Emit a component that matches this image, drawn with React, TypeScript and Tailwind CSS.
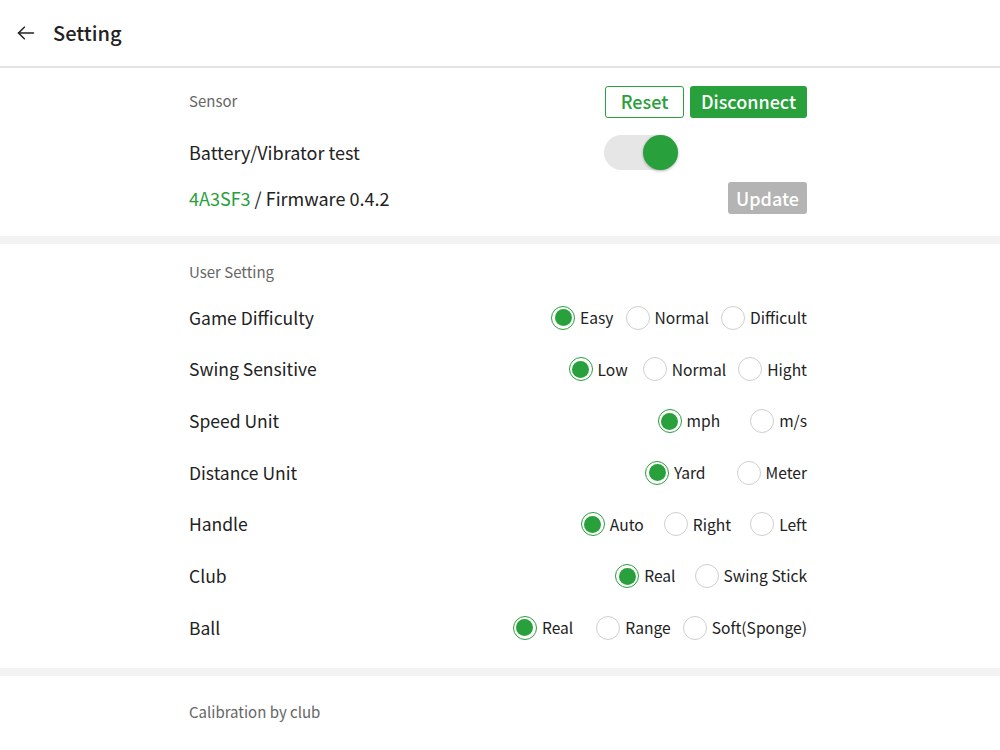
import React from "react";

const GREEN = "#28a03c";

const Radio: React.FC<{ checked?: boolean; label: string; className?: string }> = ({ checked, label, className }) => {
    return (
        <label className={`flex items-center ${className ?? ""}`}>
            {checked ? (
                <span className="w-[24px] h-[24px] rounded-full border-[1.5px] border-[#28a03c] flex items-center justify-center">
                    <span className="w-[17px] h-[17px] rounded-full bg-[#28a03c]" />
                </span>
            ) : (
                <span className="w-[24px] h-[24px] rounded-full border-[1.5px] border-[#cfcfcf] bg-white" />
            )}
            <span className="ml-[5px] text-[15.6px] text-[#222]">{label}</span>
        </label>
    );
};

const rows: { title: string; options: string[]; gaps: string[] }[] = [
    { title: "Game Difficulty", options: ["Easy", "Normal", "Difficult"], gaps: ["", "ml-[12px]", "ml-[12px]"] },
    { title: "Swing Sensitive", options: ["Low", "Normal", "Hight"], gaps: ["", "ml-[15px]", "ml-[12px]"] },
    { title: "Speed Unit", options: ["mph", "m/s"], gaps: ["", "ml-[30px]"] },
    { title: "Distance Unit", options: ["Yard", "Meter"], gaps: ["", "ml-[31px]"] },
    { title: "Handle", options: ["Auto", "Right", "Left"], gaps: ["", "ml-[20px]", "ml-[19px]"] },
    { title: "Club", options: ["Real", "Swing Stick"], gaps: ["", "ml-[19px]"] },
    { title: "Ball", options: ["Real", "Range", "Soft(Sponge)"], gaps: ["", "ml-[23px]", "ml-[12px]"] },
];

const App: React.FC = () => {
    return (
        <div className="w-[1000px] h-[750px] overflow-hidden bg-white text-[#222]" style={{ fontFamily: '"Noto Sans CJK KR", "Noto Sans", sans-serif' }}>
            {/* header */}
            <div className="h-[68px] flex items-center border-b-2 border-[#e3e3e3]">
                <svg className="ml-[16px]" width="20" height="20" viewBox="0 0 24 24" fill="none" stroke="#222" strokeWidth="1.8" strokeLinecap="round" strokeLinejoin="round">
                    <path d="M21 12H3" />
                    <path d="M10 5l-7 7 7 7" />
                </svg>
                <h1 className="ml-[17px] text-[20px] font-medium text-[#222]">Setting</h1>
            </div>

            {/* sensor */}
            <div className="w-[618px] ml-[189px] pt-[18px] pb-[22px]">
                <div className="h-[31px] flex items-center justify-between">
                    <span className="text-[15px] text-[#666]">Sensor</span>
                    <div className="flex gap-[6px]">
                        <button className="h-[32px] w-[79px] rounded-[3px] border-[1.5px] border-[#28a03c] text-[#28a03c] text-[18px] font-medium flex items-center justify-center">
                            Reset
                        </button>
                        <button className="h-[32px] w-[117px] rounded-[3px] bg-[#28a03c] text-white text-[18px] font-medium flex items-center justify-center">
                            Disconnect
                        </button>
                    </div>
                </div>
                <div className="mt-[18px] h-[35px] flex items-center">
                    <span className="text-[18px] flex-1">Battery/Vibrator test</span>
                    <div className="w-[74px] h-[35px] rounded-full bg-[#e6e6e6] flex items-center justify-end mr-[129px]">
                        <span className="w-[35px] h-[35px] rounded-full bg-[#28a03c] shadow-[0_1px_3px_rgba(0,0,0,0.3)]" />
                    </div>
                </div>
                <div className="mt-[12px] h-[32px] flex items-center justify-between">
                    <span className="text-[18px]">
                        <span style={{ color: GREEN }}>4A3SF3</span> / Firmware 0.4.2
                    </span>
                    <button className="h-[32px] w-[79px] rounded-[3px] bg-[#b4b4b4] text-white text-[18px] font-medium flex items-center justify-center">
                        Update
                    </button>
                </div>
            </div>

            <div className="h-[8px] bg-[#f3f3f3]" />

            {/* user setting */}
            <div className="w-[618px] ml-[189px] pt-[16px] pb-[14px]">
                <div className="h-[24px] flex items-center">
                    <span className="text-[15px] text-[#666]">User Setting</span>
                </div>
                <div className="mt-[8px]">
                    {rows.map((row) => (
                        <div key={row.title} className="h-[51.67px] flex items-center justify-between">
                            <span className="text-[17.5px]">{row.title}</span>
                            <div className="flex items-center">
                                {row.options.map((o, i) => (
                                    <Radio key={o + i} label={o} checked={i === 0} className={row.gaps[i]} />
                                ))}
                            </div>
                        </div>
                    ))}
                </div>
            </div>

            <div className="h-[8px] bg-[#f3f3f3]" />

            {/* calibration */}
            <div className="w-[618px] ml-[189px] pt-[25px]">
                <div className="h-[24px] flex items-center">
                    <span className="text-[15px] text-[#666]">Calibration by club</span>
                </div>
            </div>
        </div>
    );
};

export default App;
